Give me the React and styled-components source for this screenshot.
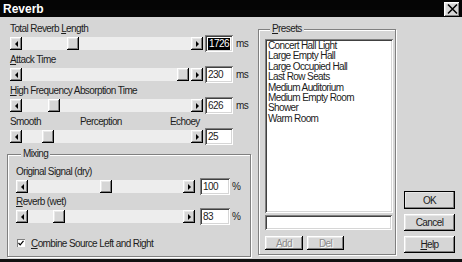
import React from 'react'
import styled, { createGlobalStyle } from 'styled-components'

const FACE = '#d6d6d6'

const GlobalStyle = createGlobalStyle`
  html, body {
    margin: 0;
    padding: 0;
    background: ${FACE};
  }
  body {
    font-family: "Liberation Sans", Arial, sans-serif;
    font-size: 10px;
    letter-spacing: -0.6px;
    color: #1c1c1c;
  }
`

const raised = `
  box-shadow: inset -1px -1px #000, inset 1px 1px #fff,
    inset -2px -2px #808080, inset 2px 2px #e8e8e8;
`
const sunken = `
  box-shadow: inset 1px 1px #808080, inset -1px -1px #fff,
    inset 2px 2px #404040, inset -2px -2px ${FACE};
`

const Window = styled.div`
  width: 462px;
  height: 262px;
  box-sizing: border-box;
  background: ${FACE};
  border-bottom: 3px solid #111;
  display: flex;
  flex-direction: column;
`

const TitleBar = styled.div`
  height: 17px;
  flex: none;
  background: #050505;
  display: flex;
  align-items: center;
  justify-content: space-between;
  padding: 0 2px 0 3px;
`

const Title = styled.span`
  color: #fff;
  font-weight: bold;
  font-size: 12px;
  letter-spacing: 0;
`

const CloseBtn = styled.div`
  width: 16px;
  height: 15px;
  margin-top: 1px;
  background: ${FACE};
  ${raised}
  display: flex;
  align-items: center;
  justify-content: center;
`

const Body = styled.div`
  flex: 1;
  display: flex;
  padding: 6px 0 0 7px;
  min-height: 0;
`

const LeftCol = styled.div`
  width: 244px;
  display: flex;
  flex-direction: column;
  padding-bottom: 2px;
`

const Sliders = styled.div`
  padding-left: 3px;
`

const Block = styled.div`
  margin-bottom: ${(p) => p.$gap}px;
`

const Label = styled.div`
  height: 12px;
  line-height: 12px;
  white-space: nowrap;
`

const Scale = styled.div`
  height: 12px;
  line-height: 12px;
  display: grid;
  grid-template-columns: 70px 90px auto;
`

const Row = styled.div`
  height: 17px;
  display: flex;
  align-items: center;
`

const Scroll = styled.div`
  width: ${(p) => p.$w}px;
  height: 13px;
  display: flex;
  flex: none;
`

const Arrow = styled.div`
  width: 12px;
  height: 13px;
  background: ${FACE};
  ${raised}
  display: flex;
  align-items: center;
  justify-content: center;
`

const Track = styled.div`
  flex: 1;
  position: relative;
  background: #ededed;
`

const Thumb = styled.div`
  position: absolute;
  top: 0;
  width: 12px;
  height: 13px;
  background: ${FACE};
  ${raised}
`

const Edit = styled.div`
  width: ${(p) => p.$w}px;
  height: 17px;
  margin-left: ${(p) => p.$gap}px;
  box-sizing: border-box;
  background: #fff;
  ${sunken}
  padding: 0 3px;
  display: flex;
  align-items: center;
  flex: none;
`

const Selected = styled.span`
  background: #000;
  color: #fff;
  line-height: 12px;
  padding: 0 1px;
`

const Unit = styled.span`
  margin-left: ${(p) => p.$gap}px;
`

const Group = styled.fieldset`
  margin: 0;
  padding: 0 0 0 ${(p) => p.$pad}px;
  border: 1px solid #808080;
  box-shadow: inset 1px 1px #fff, 1px 1px #fff;
  min-width: 0;
`

const MixGroup = styled(Group)`
  flex: 1;
  margin-top: 1px;
  padding-top: 6px;
`

const Legend = styled.legend`
  height: 12px;
  line-height: 12px;
  padding: 0 2px;
  margin-left: 5px;
  background: ${FACE};
`

const U = styled.span`
  text-decoration: underline;
  text-underline-offset: 1px;
`

const CheckRow = styled.div`
  display: flex;
  align-items: center;
  margin-top: 12px;
  height: 12px;
`

const CheckBox = styled.div`
  width: 8px;
  height: 8px;
  margin: 0 6px 0 1px;
  background: #fff;
  box-shadow: inset 1px 1px #808080, inset -1px -1px #fff;
  display: flex;
  align-items: center;
  justify-content: center;
`

const Presets = styled(Group)`
  width: 138px;
  box-sizing: border-box;
  margin: 0 0 4px 7px;
  display: flex;
  flex-direction: column;
`

const List = styled.div`
  width: 128px;
  height: 174px;
  margin-top: 4px;
  box-sizing: border-box;
  background: #fff;
  ${sunken}
  padding: 2px 3px;
`

const Item = styled.div`
  height: 10.4px;
  line-height: 10.4px;
  white-space: nowrap;
`

const NameField = styled.div`
  width: 127px;
  height: 15px;
  margin-top: 2px;
  box-sizing: border-box;
  background: #fff;
  ${sunken}
`

const SmallButtons = styled.div`
  display: flex;
  gap: 4px;
  margin-top: 6px;
`

const Button = styled.div`
  width: ${(p) => p.$w}px;
  height: ${(p) => p.$h}px;
  box-sizing: border-box;
  background: ${FACE};
  ${raised}
  display: flex;
  align-items: center;
  justify-content: center;
  color: ${(p) => (p.$disabled ? '#8a8a8a' : '#1c1c1c')};
  text-shadow: ${(p) => (p.$disabled ? '1px 1px #fff' : 'none')};
  outline: ${(p) => (p.$default ? '1px solid #000' : 'none')};
  outline-offset: -1px;
`

const Actions = styled.div`
  display: flex;
  flex-direction: column;
  justify-content: flex-end;
  gap: 5px;
  margin-left: 8px;
  padding-bottom: 6px;
`

const Tri = ({ dir }) => (
  <svg width="3" height="6" viewBox="0 0 3 6">
    {dir === 'left' ? <path d="M3 0 L0 3 L3 6 Z" fill="#000" /> : <path d="M0 0 L3 3 L0 6 Z" fill="#000" />}
  </svg>
)

const Slider = ({ width, min, max, value }) => {
  const travel = width - 24 - 12
  const left = Math.round(((value - min) / (max - min)) * travel)
  return (
    <Scroll $w={width}>
      <Arrow>
        <Tri dir="left" />
      </Arrow>
      <Track>
        <Thumb style={{ left }} />
      </Track>
      <Arrow>
        <Tri dir="right" />
      </Arrow>
    </Scroll>
  )
}

const top = [
  { label: <>Total Reverb <U>L</U>ength</>, min: 0, max: 6000, value: 1726, unit: 'ms', selected: true },
  { label: <><U>A</U>ttack Time</>, min: 0, max: 233, value: 230, unit: 'ms' },
  { label: <><U>H</U>igh Frequency Absorption Time</>, min: 0, max: 3770, value: 626, unit: 'ms' },
  { scale: true, min: 0, max: 200, value: 25 },
]

const mixing = [
  { label: 'Original Signal (dry)', min: 0, max: 200, value: 100 },
  { label: <><U>R</U>everb (wet)</>, min: 0, max: 475, value: 83 },
]

const presets = [
  'Concert Hall Light',
  'Large Empty Hall',
  'Large Occupied Hall',
  'Last Row Seats',
  'Medium Auditorium',
  'Medium Empty Room',
  'Shower',
  'Warm Room',
]

export default function App() {
  return (
    <>
      <GlobalStyle />
      <Window>
        <TitleBar>
          <Title>Reverb</Title>
          <CloseBtn>
            <svg width="11" height="10" viewBox="0 0 11 10">
              <path d="M1 0.5 L10 9.5 M10 0.5 L1 9.5" stroke="#000" strokeWidth="1.5" />
            </svg>
          </CloseBtn>
        </TitleBar>
        <Body>
          <LeftCol>
            <Sliders>
              {top.map((s, i) => (
                <Block key={i} $gap={2}>
                  {s.scale ? (
                    <Scale>
                      <span>Smooth</span>
                      <span>Perception</span>
                      <span>Echoey</span>
                    </Scale>
                  ) : (
                    <Label>{s.label}</Label>
                  )}
                  <Row>
                    <Slider width={193} min={s.min} max={s.max} value={s.value} />
                    <Edit $w={28} $gap={2}>
                      {s.selected ? <Selected>{s.value}</Selected> : s.value}
                    </Edit>
                    {s.unit && <Unit $gap={3}>{s.unit}</Unit>}
                  </Row>
                </Block>
              ))}
            </Sliders>
            <MixGroup $pad={8}>
              <Legend>Mixing</Legend>
              {mixing.map((s, i) => (
                <Block key={i} $gap={1}>
                  <Label>{s.label}</Label>
                  <Row>
                    <Slider width={179} min={s.min} max={s.max} value={s.value} />
                    <Edit $w={30} $gap={5}>{s.value}</Edit>
                    <Unit $gap={2}>%</Unit>
                  </Row>
                </Block>
              ))}
              <CheckRow>
                <CheckBox>
                  <svg width="6" height="6" viewBox="0 0 6 6">
                    <path d="M0.5 3 L2.2 4.8 L5.5 0.8" stroke="#000" strokeWidth="1.2" fill="none" />
                  </svg>
                </CheckBox>
                <span>
                  <U>C</U>ombine Source Left and Right
                </span>
              </CheckRow>
            </MixGroup>
          </LeftCol>
          <Presets $pad={6}>
            <Legend>
              <U>P</U>resets
            </Legend>
            <List>
              {presets.map((p) => (
                <Item key={p}>{p}</Item>
              ))}
            </List>
            <NameField />
            <SmallButtons>
              <Button $w={38} $h={14} $disabled>Add</Button>
              <Button $w={37} $h={14} $disabled>Del</Button>
            </SmallButtons>
          </Presets>
          <Actions>
            <Button $w={51} $h={18} $default>OK</Button>
            <Button $w={51} $h={17}>Cancel</Button>
            <Button $w={51} $h={17}>
              <span>
                <U>H</U>elp
              </span>
            </Button>
          </Actions>
        </Body>
      </Window>
    </>
  )
}
